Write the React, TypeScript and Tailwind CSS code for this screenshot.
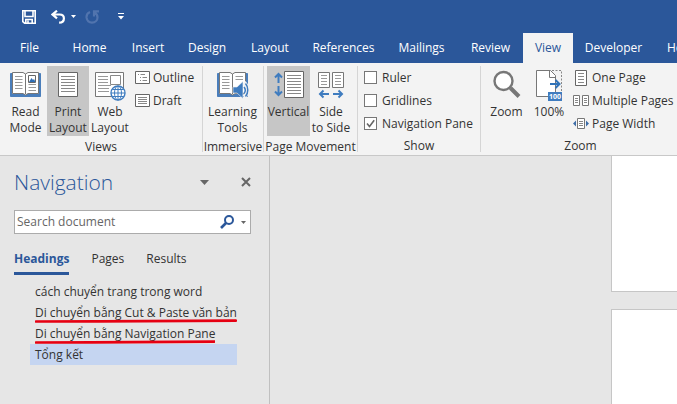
import { useState } from "react";
import type { ReactNode } from "react";
import clsx from "clsx";

const tabs = [
  { name: "File", width: "w-[59px]" },
  { name: "Home", width: "w-[61px]" },
  { name: "Insert", width: "w-[56px]" },
  { name: "Design", width: "w-[62px]" },
  { name: "Layout", width: "w-[64px]" },
  { name: "References", width: "w-[83px]" },
  { name: "Mailings", width: "w-[73px]" },
  { name: "Review", width: "w-[65px]" },
  { name: "View", width: "w-[50px]" },
  { name: "Developer", width: "w-[81px]" },
  { name: "Help", width: "w-[52px]" },
];

const headings = [
  { text: "cách chuyển trang trong word" },
  { text: "Di chuyển bằng Cut & Paste văn bản", marked: true },
  { text: "Di chuyển bằng Navigation Pane", marked: true },
  { text: "Tổng kết", selected: true },
];

export default function App() {
  return (
    <div className="flex h-screen min-w-0 flex-col overflow-hidden bg-[#e6e6e6] font-['Open_Sans','Noto_Sans',sans-serif] text-xs text-[#333]">
      <header className="shrink-0 bg-[#2b579a] text-white">
        <QuickAccess />
        <TabBar />
      </header>
      <Ribbon />
      <main className="flex min-h-0 flex-1">
        <NavigationPane />
        <section className="flex flex-1 flex-col gap-[17px] overflow-hidden pl-[341px]">
          <div className="h-[136px] shrink-0 border-b border-l border-[#c6c6c6] bg-white" />
          <div className="flex-1 border-t border-l border-[#c6c6c6] bg-white" />
        </section>
      </main>
    </div>
  );
}

const QuickAccess = () => (
  <div className="flex h-[33px] items-center pl-[22px]">
    <button aria-label="Save">
      <svg width="14" height="14" viewBox="0 0 14 14" fill="none" stroke="#fff" strokeWidth="1.6">
        <path d="M.8.8h12.4v12.4H2.6L.8 11.600zM3 .8v5.700h8V.8M3.800 13V9.500h6.400V13M6 10.500V13" />
      </svg>
    </button>
    <button aria-label="Undo" className="ml-[15px]">
      <svg width="14" height="14" viewBox="0 0 14 14" fill="none" stroke="#fff" strokeWidth="2.2">
        <path d="M6 .7 1.500 4.500 6 8.300M1.500 4.500h7.200c2.600 0 4.200 1.600 4.200 3.900 0 2.500-1.800 4.200-4.800 4.200" />
      </svg>
    </button>
    <button aria-label="Undo history" className="ml-1.5">
      <Caret className="text-white" />
    </button>
    <button aria-label="Repeat" className="ml-[9px]">
      <svg width="15" height="14" viewBox="0 0 15 14" fill="none" stroke="#5174ae" strokeWidth="2.2">
        <path d="M5 2C2.500 3 1.200 5 1.600 7.900c.5 2.800 2.600 4.700 5.400 4.700 3.300 0 5.500-2.400 5.500-5.200 0-2-1-3.700-2.800-4.600M9 6.500V1.400h5" />
      </svg>
    </button>
    <button aria-label="Customize Quick Access Toolbar" className="ml-[18px]">
      <svg width="6" height="7" viewBox="0 0 6 7" fill="#fff">
        <path d="M0 0h6v1H0zM0 3h6L3 6.500z" />
      </svg>
    </button>
  </div>
);

const TabBar = () => (
  <nav className="flex h-[30px] overflow-hidden">
    {tabs.map((tab) => (
      <button
        key={tab.name}
        className={clsx(
          "shrink-0 text-center",
          tab.width,
          tab.name === "View" && "bg-[#f3f3f3] text-[#2b579a]",
        )}
      >
        {tab.name}
      </button>
    ))}
  </nav>
);

const Ribbon = () => (
  <div className="flex h-[93px] shrink-0 overflow-hidden border-b border-[#c8c8c8] bg-[#f3f3f3] py-[3px]">
    <Group name="Views" className="w-[203px]" padding="pl-1">
      <BigButton icon={<ReadIcon />} lines={["Read", "Mode"]} />
      <BigButton icon={<PrintIcon />} lines={["Print", "Layout"]} active />
      <BigButton icon={<WebIcon />} lines={["Web", "Layout"]} />
      <div className="ml-[3px]">
        <SmallButton icon={<OutlineIcon />} label="Outline" />
        <SmallButton icon={<DraftIcon />} label="Draft" />
      </div>
    </Group>
    <Group name="Immersive" className="w-[61px]" padding="px-2">
      <BigButton icon={<LearningIcon />} lines={["Learning", "Tools"]} />
    </Group>
    <Group name="Page Movement" className="w-[94px]" padding="pl-[3px]">
      <BigButton icon={<VerticalIcon />} lines={["Vertical"]} active />
      <BigButton icon={<SideIcon />} lines={["Side", "to Side"]} />
    </Group>
    <Group name="Show" className="w-[123px]" padding="pl-1.5">
      <div>
        <Check label="Ruler" />
        <Check label="Gridlines" />
        <Check label="Navigation Pane" checked />
      </div>
    </Group>
    <Group name="Zoom" className="w-[199px] border-r-0" padding="pl-1">
      <BigButton icon={<ZoomIcon />} lines={["Zoom"]} />
      <BigButton icon={<HundredIcon />} lines={["100%"]} />
      <div className="ml-[3px]">
        <SmallButton icon={<OnePageIcon />} label="One Page" />
        <SmallButton icon={<MultiPageIcon />} label="Multiple Pages" />
        <SmallButton icon={<PageWidthIcon />} label="Page Width" />
      </div>
    </Group>
  </div>
);

const Group = ({ name, className, padding, children }: GroupProps) => (
  <section className={clsx("flex shrink-0 flex-col border-r border-[#d5d5d5]", className)}>
    <div className={clsx("flex h-[70px]", padding)}>{children}</div>
    <h2 className="flex justify-center pt-[3px] leading-4 whitespace-nowrap">{name}</h2>
  </section>
);

const BigButton = ({ icon, lines, active }: BigButtonProps) => (
  <button
    className={clsx(
      "flex w-[43px] shrink-0 flex-col items-center pt-1 whitespace-nowrap not-first:w-[42px]",
      active && "bg-[#c6c6c6]",
    )}
  >
    <span className="flex h-[34px] items-start justify-center">{icon}</span>
    {lines.map((line) => (
      <span key={line} className="leading-4">
        {line}
      </span>
    ))}
  </button>
);

const SmallButton = ({ icon, label }: { icon: ReactNode; label: string }) => (
  <button className="flex h-[23px] items-center gap-[3px] whitespace-nowrap">
    <span className="flex w-4 justify-center">{icon}</span>
    {label}
  </button>
);

const Check = ({ label, checked = false }: { label: string; checked?: boolean }) => {
  const [on, setOn] = useState(checked);

  return (
    <label className="flex h-[23px] items-center gap-[5px] whitespace-nowrap">
      <span className="relative flex">
        <input
          type="checkbox"
          checked={on}
          onChange={(e) => setOn(e.target.checked)}
          className="size-[13px] appearance-none border border-[#777] bg-white"
        />
        {on && (
          <svg className="pointer-events-none absolute inset-0" width="13" height="13" fill="none" stroke="#666" strokeWidth="1.6">
            <path d="m3 6.500 2.500 3 4.700-6.300" />
          </svg>
        )}
      </span>
      {label}
    </label>
  );
};

const NavigationPane = () => (
  <aside className="w-[270px] shrink-0 border-r border-[#c0c0c0] pt-3 pl-3.5">
    <div className="flex h-7 items-center pr-[18px]">
      <h1 className="flex-1 text-[21px] leading-7 font-light text-[#2b579a]">Navigation</h1>
      <button aria-label="Pane options" className="mr-8">
        <svg width="9" height="5" fill="#666">
          <path d="M0 0h9L4.500 5z" />
        </svg>
      </button>
      <button aria-label="Close">
        <svg width="10" height="10" fill="none" stroke="#666" strokeWidth="2">
          <path d="m1 1 8 8M9 1 1 9" />
        </svg>
      </button>
    </div>
    <div className="mt-3.5 mr-[18px] flex h-6 items-center border border-[#ababab] bg-white pr-1">
      <input
        aria-label="Search document"
        placeholder="Search document"
        className="min-w-0 flex-1 pl-0.5 outline-none placeholder:text-[#666]"
      />
      <button aria-label="Search">
        <svg width="15" height="14" fill="none" stroke="#2b579a">
          <circle cx="9" cy="5" r="4" strokeWidth="2" />
          <path d="m6 8-5 5" strokeWidth="2.600" />
        </svg>
      </button>
      <button aria-label="Search options" className="ml-1.5">
        <Caret className="text-[#666]" />
      </button>
    </div>
    <div className="mt-3.5 flex gap-[22px] leading-[22px]">
      <button className="border-b-3 border-[#2b579a] pb-0.5 font-bold text-[#2b579a]">
        Headings
      </button>
      <button className="border-b-3 border-transparent pb-0.5">Pages</button>
      <button className="border-b-3 border-transparent pb-0.5">Results</button>
    </div>
    <ul className="mt-1.5 mr-8 ml-4">
      {headings.map((heading) => (
        <li key={heading.text} className={clsx("h-[21px] pl-[5px] leading-[21px]", heading.selected && "bg-[#c5d5f1]")}>
          <a href="#" className="relative inline-block whitespace-nowrap">
            {heading.text}
            {heading.marked && <RedLine />}
          </a>
        </li>
      ))}
    </ul>
  </aside>
);

const RedLine = () => (
  <svg className="absolute bottom-0 left-0 h-1 w-full" viewBox="0 0 190 4" preserveAspectRatio="none">
    <path d="M1 2.500 60 2.400 189 1.600" fill="none" stroke="#e60012" strokeWidth="2.600" strokeLinecap="round" />
  </svg>
);

const Caret = ({ className }: { className: string }) => (
  <svg className={className} width="5" height="3" fill="currentColor">
    <path d="M0 0h5L2.500 3z" />
  </svg>
);

/* Ribbon icons */

const Book = () => (
  <>
    <path d="M.5 3.500H2v21h27v-21h1.500v23H.5z" fill="#4a7ebb" stroke="#4a7ebb" />
    <path d="M2.500 2.500H13l2.500 1.500L18 2.500h10.500v21H18L15.500 25 13 23.500H2.500zM15.500 4v20" fill="#fff" stroke="#777" />
    <path d="M5 6.500h7.500M5 9.500h7.500M5 12.500h7.500M5 15.500h7.500M5 18.500h7.500" stroke="#999" />
  </>
);

const ReadIcon = () => (
  <svg width="31" height="28" fill="none">
    <Book />
    <path d="M18.500 14.500H26M18.500 17.500H26M18.500 20.500H26" stroke="#999" />
    <path d="M18.500 5.500h7v7h-7z" fill="#fff" stroke="#666" />
    <path d="m19 12 2.500-4 1.500 2 1-1 1.500 3z" fill="#2f6eb5" />
  </svg>
);

const PrintIcon = () => (
  <svg width="22" height="28" fill="none">
    <path d="M1.500 2.500h19v24h-19z" fill="#fff" stroke="#666" />
    <path d="M4 6.500h14M4 9.500h14M4 12.500h14M4 15.500h14M4 18.500h14M4 21.500h14" stroke="#888" />
  </svg>
);

const WebIcon = () => (
  <svg width="32" height="31" fill="none">
    <path d="M1.500 2.500h28v24h-28z" fill="#fff" stroke="#777" />
    <path d="M4 6.500h10M4 9.500h10M4 12.500h10M4 15.500h13M4 18.500h11M4 21.500h11" stroke="#999" />
    <path d="M16.500 5.500h10v9h-10z" fill="#fff" stroke="#888" />
    <circle cx="24" cy="23" r="7" fill="#fff" stroke="#3f7cbf" strokeWidth="1.400" />
    <path d="M17 23h14M24 16v14M18.500 19.500h11M18.500 26.500h11" stroke="#3f7cbf" />
    <ellipse cx="24" cy="23" rx="3.500" ry="7" stroke="#3f7cbf" />
  </svg>
);

const LearningIcon = () => (
  <svg width="32" height="29" fill="none">
    <Book />
    <path d="M18.500 6.500H26M18.500 9.500H26" stroke="#999" />
    <path d="M16 17h4l6-5.500v17L20 23h-4z" fill="#3f7cbf" stroke="#f3f3f3" strokeWidth=".6" />
    <path d="M27 12.500c4 3.500 4 11 0 14.500" stroke="#f3f3f3" strokeWidth="4" />
    <path d="M27 17c1.600 2 1.600 4.500 0 6.500M28.500 13.500c3 3.500 3 9.500 0 13" stroke="#3f7cbf" strokeWidth="1.500" />
  </svg>
);

const VerticalIcon = () => (
  <svg width="30" height="29" fill="none">
    <path d="M10.500 1.500h19v26h-19z" fill="#fff" stroke="#666" />
    <path d="M13 5.500h14M13 8.500h14M13 11.500h14M13 14.500h14M13 17.500h14M13 20.500h14M13 23.500h14" stroke="#888" />
    <path d="M4.500 4v9M1 7.500 4.500 4 8 7.500M4.500 16v9M1 21.500 4.500 25 8 21.500" stroke="#3f7cbf" strokeWidth="2" />
  </svg>
);

const SideIcon = () => (
  <svg width="28" height="29" fill="none">
    <path d="M1.500 2.500h11v15h-11zM15.500 2.500h11v15h-11z" fill="#fff" stroke="#777" />
    <path d="M4 5.500h6M4 8.500h6M4 11.500h6M4 14.500h6M18 5.500h6M18 8.500h6M18 11.500h6M18 14.500h6" stroke="#999" />
    <path d="M12 24H3M6.500 20.500 3 24l3.500 3.500M16 24h9M21.500 20.500 25 24l-3.500 3.500" stroke="#3f7cbf" strokeWidth="2" />
  </svg>
);

const ZoomIcon = () => (
  <svg width="28" height="29" fill="none" stroke="#777">
    <circle cx="10.500" cy="11" r="9" fill="#fff" strokeWidth="2.400" />
    <path d="m17.500 18 8.500 8.500" strokeWidth="4" />
  </svg>
);

const HundredIcon = () => (
  <svg width="28" height="32" fill="none">
    <path d="M1.500.5h14l5 5v21h-19z" fill="#fff" stroke="#777" />
    <path d="M14.500.5v7h6" stroke="#777" />
    <path d="M17 .5h9.500v22" stroke="#888" strokeDasharray="2 1.500" />
    <path d="M15 14h9M20.500 10l4 4-4 4" stroke="#3073b9" strokeWidth="2" />
    <path d="M13 22h14v9H13z" fill="#3f7cbf" />
    <text x="20" y="29" textAnchor="middle" fill="#fff" fontSize="7" fontWeight="700">
      100
    </text>
  </svg>
);

const OutlineIcon = () => (
  <svg width="15" height="13" fill="none">
    <path d="M.5.5h14v12H.5z" fill="#fff" stroke="#666" />
    <path d="M3 3.500h1M5.500 3.500H10M5 6.500h1M7.500 6.500H12M5 9.500h1M7.500 9.500H12" stroke="#888" />
  </svg>
);

const DraftIcon = () => (
  <svg width="15" height="13" fill="none">
    <path d="M.5.5h14v12H.5z" fill="#fff" stroke="#666" />
    <path d="M3 3.500h9M3 5.500h9M3 7.500h9M3 9.500h9" stroke="#888" />
  </svg>
);

const OnePageIcon = () => (
  <svg width="12" height="16" fill="none">
    <path d="M.5.5h11v15H.5z" fill="#fff" stroke="#666" />
    <path d="M3 3.500h6M3 6.500h6M3 9.500h6M3 12.500h6" stroke="#888" />
  </svg>
);

const MultiPageIcon = () => (
  <svg width="16" height="11" fill="none">
    <path d="M.5.5h6v10h-6zM9.500.5h6v10h-6z" fill="#fff" stroke="#777" />
    <path d="M2 3.500h3M2 5.500h3M2 7.500h3M11 3.500h3M11 5.500h3M11 7.500h3" stroke="#888" />
  </svg>
);

const PageWidthIcon = () => (
  <svg width="16" height="11" fill="none">
    <path d="M4.500.5h7v10h-7z" fill="#fff" stroke="#777" />
    <path d="M6 3.500h4M6 5.500h4M6 7.500h4" stroke="#888" />
    <path d="M3 2.500v6l-3-3zM13 2.500v6l3-3z" fill="#3f6ea8" />
  </svg>
);

interface GroupProps {
  name: string;
  className: string;
  padding: string;
  children: ReactNode;
}

interface BigButtonProps {
  icon: ReactNode;
  lines: string[];
  active?: boolean;
}
